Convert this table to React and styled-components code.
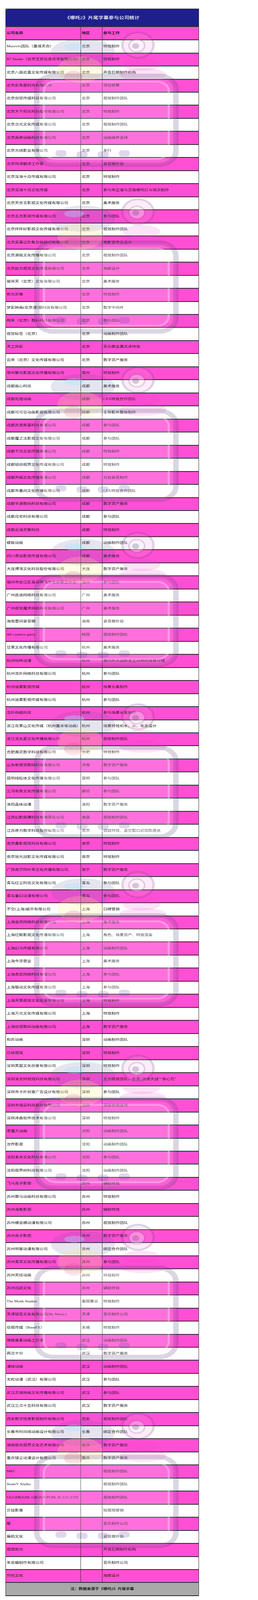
import React, { useLayoutEffect, useState } from "react";
import styled, { createGlobalStyle } from "styled-components";

const GlobalStyle = createGlobalStyle`
  html, body { margin: 0; padding: 0; background: #ffffff; }
  body { font-family: "Liberation Serif", "Noto Sans CJK SC", serif; }
`;

/* --vy: vertical fit factor of the frame (1 when the frame is the full 5082px) */
const Page = styled.div`
  --vy: 1;
  position: relative;
  width: 660px;
  height: calc(5082px * var(--vy));
  padding: calc(27px * var(--vy)) 0 0 14px;
  box-sizing: border-box;
  overflow: hidden;
`;

const Sheet = styled.div`
  width: 495px;
  box-sizing: border-box;
  border-left: 1px solid #2a2a2a;
  border-right: 1px solid #2a2a2a;
  display: flex;
  flex-direction: column;
`;

const Label = styled.span`
  display: inline-block;
  transform: scaleY(var(--vy));
  transform-origin: 50% 50%;
`;

const TitleBar = styled.div`
  position: relative;
  height: calc(59px * var(--vy));
  flex: none;
  box-sizing: border-box;
  border-top: 1px solid #3a3a3a;
  border-bottom: 2px solid #2a2a2a;
  background: #1e1f8c;
  color: #ffffff;
  display: flex;
  align-items: center;
  justify-content: center;
  padding-top: calc(3px * var(--vy));
  font-size: 13px;
  line-height: 1.2;
  font-weight: 500;
  letter-spacing: 0.2px;

  &::before {
    content: "";
    position: absolute;
    left: 0;
    top: 0;
    border-top: 4px solid #2f9a3a;
    border-right: 4px solid transparent;
  }
`;

const Row = styled.div`
  display: grid;
  grid-template-columns: 192px 55px 246px;
  flex: none;
  height: calc(${(p) => p.$h || 41.54}px * var(--vy));
  box-sizing: border-box;
  border-bottom: 2px solid #2a2a2a;
  background: ${(p) => (p.$pink ? "#ff4fd4" : "#ffffff")};
  color: #1c1c1c;
  font-size: 10.5px;
  line-height: 1.2;
  font-weight: ${(p) => (p.$bold ? 700 : 400)};
`;

const Cell = styled.div`
  display: flex;
  align-items: center;
  padding-left: 2px;
  box-sizing: border-box;
  white-space: nowrap;
  overflow: visible;
  border-right: ${(p) => (p.$last ? "none" : "1px solid #2a2a2a")};
`;

const Footer = styled.div`
  height: calc(42px * var(--vy));
  flex: none;
  box-sizing: border-box;
  border-bottom: 2px solid #2a2a2a;
  background: #a9a9a9;
  color: #1c1c1c;
  font-size: 10.5px;
  line-height: 1.2;
  font-weight: 700;
  display: flex;
  align-items: center;
  justify-content: center;
`;

const Overlay = styled.svg`
  position: absolute;
  top: 0;
  left: 0;
  width: 660px;
  height: 100%;
  pointer-events: none;
`;

const DATA = `Morevfx团队（墨境天合）|北京|特效制作
R7 Studio（北京艾奇信息技术有限公司）|北京|特效制作
北京八面欢喜文化传媒有限公司|北京|声音后期制作机构
北京彩条屋科技有限公司|北京|项目统筹
北京创觉传媒科技有限公司|北京|视效制作团队
北京大千阳光科技股份有限公司|北京|特效制作
北京点光文化传媒有限公司|北京|视效制作团队
北京高渺动画科技有限公司|北京|动画插件支持
北京光线影业有限公司|北京|发行
北京珂译翻译工作室|北京|录音棚外协
北京深海十月传媒有限公司|北京|特效制作
北京深海十月文化传媒|北京|参与申正道与灵珠哪吒打斗场次制作
北京天合言影视文化传媒有限公司|北京|美术服务
北京瓦克影视传媒有限公司|北京|参与团队
北京样样好影视文化传媒有限公司|北京|视效制作团队
北京英事达形象包装顾问有限公司|北京|电影宣传品设计
北京源极文化传播有限公司|北京|视效制作团队
北京赵力视觉文化传媒有限公司|北京|海报设计
彼岸天（北京）文化有限公司|北京|美术服务
和光羿像|北京|特效制作
梦彩映画(北京)影视科技有限公司|北京|数字中间片
砌禾（北京）数码科技有限公司|北京|参与团队
视觉标签（北京）|北京|动画制作团队
天工异彩|北京|天元鼎金属光泽特效
云央（北京）文化传媒有限公司|北京|数字资产服务
常州聚光影视文化传播有限公司|常州|特效制作
成都画心科技|成都|美术服务
成都炬煌动画|成都|CFX特效合作团队
成都可可豆动画影视有限公司|成都|主导影片整体制作
成都克里斯基科技有限公司|成都|参与团队
成都魔之法影视文化有限公司|成都|参与团队
成都千鸟文化传播有限公司|成都|特效制作
成都锐创视界文化传媒有限公司|成都|特效制作
成都声娱文化传播有限公司|成都|对白录音制作
成都市墨间文化传播有限公司|成都|CFX特效合作团队
成都辛源数码科技有限公司|成都|数字资产服务
成都月宅科技有限公司|成都|参与团队
成都云海天聚科技|成都|特效制作
蝼蚁动画|成都|动画制作团队
四川黑焰影视传媒有限公司|成都|美术服务
大连博涛文化科技股份有限公司|大连|数字资产服务
福州市台江区枭羽寒飞文化创意工作室|福州|参与团队
广州底迪网络科技有限公司|广州|美术服务
广州视觉魔术网络科技有限公司|广州|美术服务
海南壹间录音棚|海南|录音棚外协
4th creative party|韩国|视效制作团队
甘果文化传播有限公司|杭州|美术服务
杭州咕咚动漫|杭州|鼎内外大战和龙王对峙的场景分镜
杭州浩扑网络科技有限公司|杭州|参与团队
杭州迷雾影视传媒|杭州|场景元素制作
杭州迷雾影视传媒有限公司|杭州|参与团队
浩扑网络科技|杭州|参与场景元素制作
浙江花果山文化传媒（杭州露米埃动画）|杭州|场景特效如水、火、毛发设计
浙江泥丸星文化传播有限公司|杭州|视效制作团队
合肥瀚灵数字科技有限公司|合肥|特效制作
山东新视觉数码科技有限公司|济南|数字资产服务
昆明线粒体文化传播有限公司|昆明|参与团队
三河有鱼文化传播有限公司|廊坊|参与团队
洛阳晶体动漫|洛阳|数字资产服务
江西幻影疯爆科技有限责任公司|南昌|视效制作团队
江苏原力数字科技股份有限公司|南京|锁链特效、虚空裂口初现陈唐关
南京叠影视觉科技有限公司|南京|特效制作
南京旭光冠影文化传媒有限公司|南京|特效制作
广西南宁四叶草文化传播有限公司|南宁|数字资产服务
青岛红尘科技文化有限公司|青岛|参与团队
青岛童幻动漫有限公司|青岛|参与团队
不空(上海)娱乐有限公司|上海|口碑营销
上海虫师网络科技有限公司|上海|美术服务
上海红鲸影视文化传播有限公司|上海|角色、场景资产、特效渲染
上海幻马传媒有限公司|上海|动画制作团队
上海今涂营业|上海|美术服务
上海君宏网络科技有限公司|上海|参与团队
上海猫动文化传媒有限公司|上海|参与团队
上海天策视效文化发展有限公司|上海|特效制作
上海万光文化传媒有限公司|上海|特效制作
上海优塔数码动画有限公司|上海|数字资产服务
和弈动画|深圳|动画制作团队
巨核视效|深圳|特效制作
深圳黑屋文化创意有限公司|深圳|特效制作
深圳洛克特视效科技有限公司|深圳|主力视效团队，负责“洪流大战”“穿心咒”
深圳市卡扑创意广告设计有限公司|深圳|参与团队
深圳市瑞云科技股份有限公司|深圳|渲染农场支持
深圳泽森软件技术有限公司|深圳|特效制作
黑魔方动画|沈阳|动画制作团队
汝乔影视|沈阳|动画制作团队
沈阳多米文化科技有限公司|沈阳|参与团队
沈阳视界树科技有限公司|沈阳|动画制作团队
飞马良子影视|苏州|辅助特效
苏州霏马动画科技有限公司|苏州|特效制作
苏州海象影视|苏州|辅助特效
苏州横竖横动漫有限公司|苏州|视效制作团队
苏州良子影视|苏州|数字资产服务
苏州明客动漫有限公司|苏州|绑定合作团队
苏州青芽文化传播有限公司|苏州|参与团队
苏州天炫动画|苏州|特效制作
苏州迅跃文化|苏州|辅助特效
The Monk Studios|泰国曼谷|特效制作
天津锐音文化有限公司(Ry Music)|天津|音乐制作公司
倍视传媒（BaseFX）|无锡|特效制作
弹跳像素动画工作室|武汉|动画制作团队
两点十分|武汉|数字资产服务
漫核动画|武汉|动画制作团队
太崆动漫（武汉）有限公司|武汉|参与团队
武汉灵境映画文化传播有限公司|武汉|参与团队
武汉三点十五科技有限公司|武汉|数字资产服务
西安数字怪兽影视制作有限公司|西安|视效制作团队
长春市时间线动画设计有限公司|长春|绑定合作团队
湖南极也视界文化艺术有限公司|长沙|数字资产服务
重庆镜尘动漫设计有限公司|重庆|数字资产服务
M83||视效制作团队
StoneV Studio||视效制作团队
UGGDRAZIL GROUP PUBL IC CO.,LTD||视效制作团队
贝挞影像||短视频营销
鲲||音乐制作公司
藤韵文化||录音棚外协
熠熠和光||声音后期制作机构
朱芸编制作有限公司||音乐制作公司
竹也文化||海报设计`
  .split("\n")
  .map((l) => l.split("|"));

const EYES = [143, 673, 1207, 1732, 2277, 2810, 3393, 3930, 4530];

function Mark({ y }) {
  return (
    <g transform={`translate(0 ${y})`}>
      <ellipse cx="212" cy="22" rx="82" ry="42" fill="rgba(80,80,150,0.15)" />
      <ellipse cx="190" cy="6" rx="26" ry="11" fill="rgba(170,225,255,0.35)" />
      <ellipse cx="205" cy="78" rx="58" ry="42" fill="rgba(255,235,130,0.22)" />
      <ellipse cx="188" cy="102" rx="24" ry="20" fill="rgba(200,40,150,0.16)" />
      <circle cx="353" cy="0" r="40" fill="rgba(255,150,220,0.18)" stroke="rgba(70,50,110,0.18)" strokeWidth="6" />
      <circle cx="350" cy="2" r="20" fill="rgba(255,255,255,0.3)" stroke="rgba(70,50,110,0.18)" strokeWidth="4" />
      <circle cx="347" cy="3" r="9" fill="rgba(60,40,100,0.22)" />
      <ellipse cx="362" cy="62" rx="48" ry="20" fill="rgba(235,60,200,0.15)" />
      <ellipse cx="366" cy="94" rx="60" ry="20" fill="rgba(235,60,200,0.15)" />
      <rect x="94" y="98" width="356" height="282" rx="42" fill="rgba(255,255,255,0.1)" stroke="rgba(70,50,110,0.2)" strokeWidth="14" />
      <rect x="112" y="116" width="320" height="246" rx="30" fill="rgba(255,255,255,0.1)" stroke="rgba(255,255,255,0.3)" strokeWidth="6" />
      <rect x="142" y="334" width="28" height="20" rx="8" fill="rgba(90,60,160,0.2)" />
      <rect x="196" y="338" width="28" height="20" rx="8" fill="rgba(90,60,160,0.2)" />
      <rect x="250" y="338" width="28" height="20" rx="8" fill="rgba(90,60,160,0.2)" />
      <rect x="304" y="334" width="28" height="20" rx="8" fill="rgba(90,60,160,0.2)" />
    </g>
  );
}

function frameFactor() {
  if (typeof window === "undefined") return 1;
  const h = window.innerHeight || 5082;
  return Math.min(1, h / 5082);
}

export default function App() {
  const [vy, setVy] = useState(frameFactor);

  useLayoutEffect(() => {
    const update = () => setVy(frameFactor());
    update();
    window.addEventListener("resize", update);
    return () => window.removeEventListener("resize", update);
  }, []);

  return (
    <>
      <GlobalStyle />
      <Page style={{ "--vy": vy }}>
        <Sheet>
          <TitleBar>
            <Label>《哪吒2》片尾字幕参与公司统计</Label>
          </TitleBar>
          <Row $pink $bold $h={42}>
            <Cell><Label>公司名称</Label></Cell>
            <Cell><Label>地区</Label></Cell>
            <Cell $last><Label>参与工作</Label></Cell>
          </Row>
          {DATA.map(([name, region, work], i) => (
            <Row key={i} $pink={i % 2 === 1}>
              <Cell><Label>{name}</Label></Cell>
              <Cell>{region ? <Label>{region}</Label> : null}</Cell>
              <Cell $last><Label>{work}</Label></Cell>
            </Row>
          ))}
          <Footer>
            <Label>注：数据来源于《哪吒2》片尾字幕</Label>
          </Footer>
        </Sheet>
        <Overlay viewBox="0 0 660 5082" preserveAspectRatio="none" aria-hidden="true">
          {EYES.map((y) => (
            <Mark key={y} y={y} />
          ))}
        </Overlay>
      </Page>
    </>
  );
}
